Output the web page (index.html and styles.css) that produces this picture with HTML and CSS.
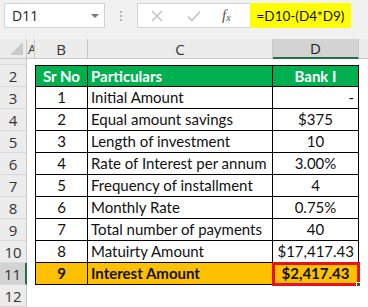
FILE: index.html
```html
<!DOCTYPE html>
<html>
<head>
<meta charset="utf-8">
<link rel="stylesheet" href="styles.css">
</head>
<body>
<div class="app">
  <div class="fbar">
    <div class="namebox"><span>D11</span><span class="caret"></span></div>
    <div class="dots"><i></i><i></i><i></i></div>
    <div class="fbox">
      <svg class="ico-x" width="12" height="12" viewBox="0 0 12 12"><path d="M1 1L11 11M11 1L1 11" stroke="#c4c4c4" stroke-width="1.6" fill="none"/></svg>
      <svg class="ico-ok" width="14" height="12" viewBox="0 0 14 12"><path d="M1 6.5L5 10.5L13 1.5" stroke="#c4c4c4" stroke-width="1.6" fill="none"/></svg>
      <span class="fx">f<sub>x</sub></span>
    </div>
    <div class="formula">=D10-(D4*D9)</div>
  </div>
  <div class="sheet">
    <div class="corner"><span class="tri"></span></div>
    <div class="ch cha">A</div>
    <div class="ch">B</div>
    <div class="ch">C</div>
    <div class="ch sel">D</div>
    <div class="ch che"></div>

    <div class="rh r1"></div><div class="c r1"></div><div class="c r1"></div><div class="c r1"></div><div class="c r1"></div><div class="c r1"></div>

    <div class="rh">2</div><div class="c"></div>
    <div class="t hd ctr lft">Sr No</div><div class="t hd">Particulars</div><div class="t hd ctr">Bank I</div><div class="c"></div>

    <div class="rh">3</div><div class="c"></div>
    <div class="t ctr lft">1</div><div class="t">Initial Amount</div><div class="t rgt">-</div><div class="c"></div>

    <div class="rh">4</div><div class="c"></div>
    <div class="t ctr lft">2</div><div class="t">Equal amount savings</div><div class="t ctr">$375</div><div class="c"></div>

    <div class="rh">5</div><div class="c"></div>
    <div class="t ctr lft">3</div><div class="t">Length of investment</div><div class="t ctr">10</div><div class="c"></div>

    <div class="rh">6</div><div class="c"></div>
    <div class="t ctr lft">4</div><div class="t">Rate of Interest per annum</div><div class="t ctr">3.00%</div><div class="c"></div>

    <div class="rh">7</div><div class="c"></div>
    <div class="t ctr lft">5</div><div class="t">Frequency of installment</div><div class="t ctr">4</div><div class="c"></div>

    <div class="rh">8</div><div class="c"></div>
    <div class="t ctr lft">6</div><div class="t">Monthly Rate</div><div class="t ctr">0.75%</div><div class="c"></div>

    <div class="rh">9</div><div class="c"></div>
    <div class="t ctr lft">7</div><div class="t">Total number of payments</div><div class="t ctr">40</div><div class="c"></div>

    <div class="rh">10</div><div class="c"></div>
    <div class="t ctr lft">8</div><div class="t">Matuirty Amount</div><div class="t rgt">$17,417.43</div><div class="c"></div>

    <div class="rh rsel">11</div><div class="c"></div>
    <div class="t tot ctr lft">9</div><div class="t tot">Interest Amount</div><div class="t tot ctr active">$2,417.43<span class="handle"></span></div><div class="c"></div>

    <div class="rh">12</div><div class="c"></div><div class="c"></div><div class="c"></div><div class="c"></div><div class="c"></div>
  </div>
</div>
</body>
</html>
```

FILE: styles.css
```css
* { box-sizing: border-box; }
html, body { margin: 0; padding: 0; }
body { width: 368px; height: 307px; overflow: hidden; background: #fff; }
.app { width: 368px; height: 307px; display: flex; flex-direction: column; }

.fbar {
  height: 39px;
  background: #f1f1f1;
  display: flex;
  align-items: flex-start;
  padding: 3px 0 0 4px;
  font-family: "Open Sans", "DejaVu Sans", sans-serif;
}
.namebox {
  width: 101px; height: 25px;
  background: #fff; border: 1px solid #d4d4d4;
  display: flex; align-items: center; justify-content: space-between;
  padding: 0 5px 0 7px;
  font-size: 14px; color: #222;
}
.caret {
  width: 0; height: 0;
  border-left: 4px solid transparent; border-right: 4px solid transparent;
  border-top: 4px solid #777;
}
.dots { width: 32px; height: 25px; display: flex; flex-direction: column; align-items: center; justify-content: center; gap: 2px; }
.dots i { display: block; width: 2px; height: 2px; background: #b5b5b5; }
.fbox {
  width: 113px; height: 25px; background: #fff; border: 1px solid #d4d4d4; border-right: none;
  display: flex; align-items: center; padding-left: 13px;
}
.ico-x { margin-right: 24px; }
.ico-ok { margin-right: 21px; }
.fx { font-family: "Liberation Serif", serif; font-style: italic; font-size: 15px; color: #555; }
.fx sub { font-size: 10px; vertical-align: -1px; }
.formula {
  width: 101px; height: 25px; background: #ffff00;
  display: flex; align-items: center; justify-content: center;
  font-family: "Lato", "Open Sans", sans-serif;
  font-size: 13.5px; color: #111;
}

.sheet {
  display: grid;
  grid-template-columns: 27px 8px 53px 185px 86px 9px;
  grid-template-rows: 20px 6px repeat(11, 22px);
  font-family: "Lato", "Open Sans", sans-serif;
  font-size: 15px;
  color: #111;
}
.corner { background: #ececec; border-right: 1px solid #c8c8c8; border-bottom: 1px solid #c8c8c8; position: relative; }
.tri { position: absolute; right: 3px; bottom: 3px; width: 0; height: 0;
  border-left: 13px solid transparent; border-bottom: 13px solid #c9c9c9; }
.ch {
  background: #ececec; border-right: 1px solid #c8c8c8; border-bottom: 1px solid #c8c8c8;
  display: flex; align-items: center; justify-content: center;
  font-family: "Open Sans", "DejaVu Sans", sans-serif; font-size: 15px; color: #333;
  overflow: hidden;
}
.cha { justify-content: flex-start; padding-left: 1px; font-size: 13px; }
.che { border-right: none; }
.ch.sel { background: #d3d3d3; border-bottom: 2px solid #217346; color: #222; }
.rh {
  background: #ececec; border-right: 1px solid #c8c8c8; border-bottom: 1px solid #d8d8d8;
  display: flex; align-items: center; justify-content: center;
  font-family: "Open Sans", "DejaVu Sans", sans-serif; font-size: 15px; color: #333;
}
.rh.rsel { background: #d3d3d3; border-right: 2px solid #217346; }
.c { background: #fff; }
.t {
  background: #fff;
  border-right: 1px solid #000; border-bottom: 1px solid #000;
  display: flex; align-items: center; padding: 0 3px 1px;
  white-space: nowrap; position: relative;
}
.t.lft { border-left: 1px solid #000; }
.t.hd { background: #00b050; color: #fff; font-weight: bold; border-top: 1px solid #000; }
.t.ctr { justify-content: center; }
.t.rgt { justify-content: flex-end; padding-right: 4px; }
.t.tot { background: #ffc000; font-weight: bold; }
.t.active { outline: 3px solid #e8101b; outline-offset: -2px; }
.handle { position: absolute; right: -3px; bottom: -3px; width: 5px; height: 5px; background: #5a4a1a; border: 1px solid #fff; }
```
